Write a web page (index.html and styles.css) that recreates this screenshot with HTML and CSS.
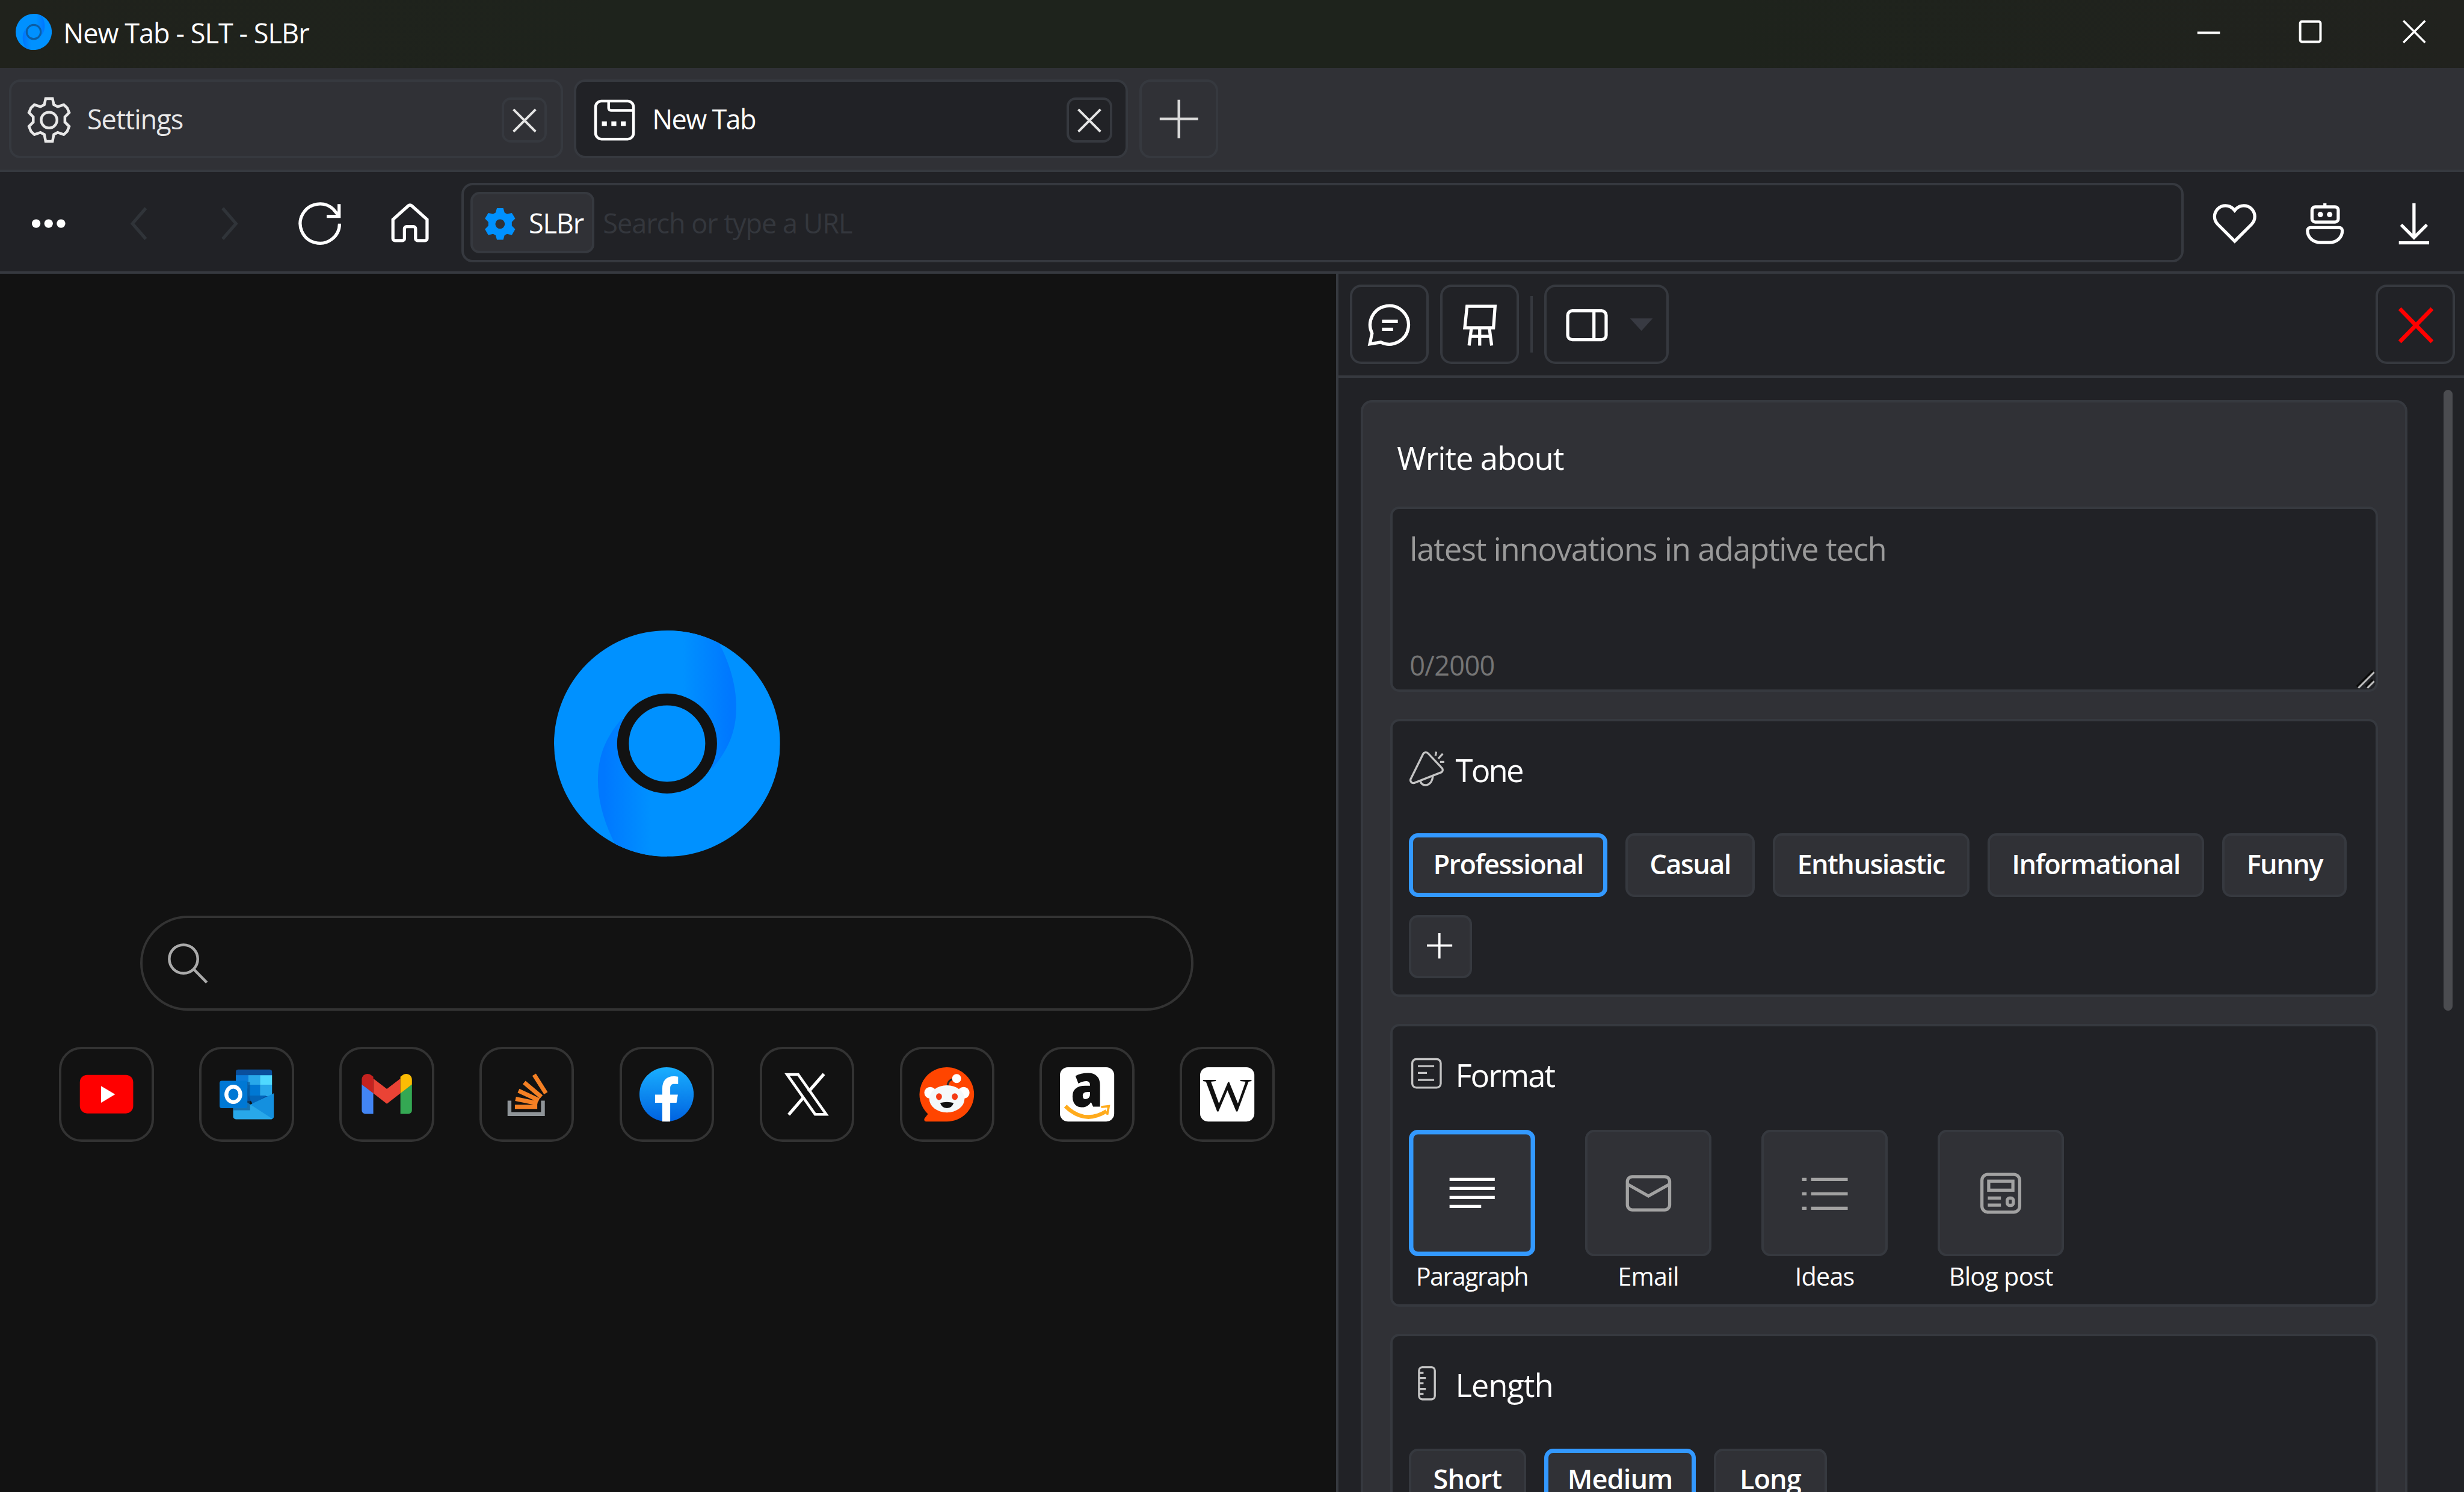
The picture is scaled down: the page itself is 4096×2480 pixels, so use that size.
FILE: index.html
```html
<!DOCTYPE html>
<html lang="en">
<head>
<meta charset="utf-8">
<title>New Tab - SLT - SLBr</title>
<link rel="stylesheet" href="styles.css">
</head>
<body>
<svg class="defs" width="0" height="0">
  <defs>
    <linearGradient id="blade" gradientUnits="userSpaceOnUse" x1="57" y1="0" x2="78" y2="0">
      <stop offset="0" stop-color="#0091ff"/><stop offset="1" stop-color="#0078ff"/>
    </linearGradient>
    <clipPath id="disc"><circle cx="50" cy="50" r="50"/></clipPath>
    <symbol id="logo" viewBox="0 0 100 100">
      <circle cx="50" cy="50" r="50" fill="#0091ff"/>
      <g clip-path="url(#disc)">
        <path id="swoosh" d="M50 0H70C77 12 80.6 23 80.6 34C80.6 46 76 54 70 61L50 50z" fill="url(#blade)"/>
        <use href="#swoosh" transform="rotate(180 50 50)"/>
      </g>
      <circle cx="50" cy="50" r="19.5" fill="#0091ff" stroke="currentColor" stroke-width="5.2"/>
    </symbol>
    <symbol id="cross" viewBox="0 0 20 20"><path d="M5.2 5.3l9.8 9.8M15 5.3l-9.8 9.8"/></symbol>
  </defs>
</svg>
<div class="window">
  <header class="titlebar">
    <svg class="app-icon"><use href="#logo"/></svg>
    <span class="t title">New Tab - SLT - SLBr</span>
    <div class="controls">
      <svg viewBox="0 0 45 30"><path d="M17.5 14.5h10"/></svg>
      <svg viewBox="0 0 45 30"><rect x="18" y="9.5" width="9" height="9" rx=".8"/></svg>
      <svg class="thin" viewBox="0 0 45 30"><path d="M18.7 9.2l9.6 9.6M28.3 9.2l-9.6 9.6"/></svg>
    </div>
  </header>

  <nav class="tabs">
    <div class="tab">
      <svg class="tab-icon" viewBox="0 0 20 20"><path d="M8.500.500h3l.6 2.700 1.700.9 2.700-.9 1.500 1.400.9 2.100-1.900 1.900v2.300l1.900 1.900-.9 2.200-1.500 1.400-2.700-.9-1.700.9-.6 3h-3l-.6-3-1.700-.9-2.700.9L2 15l-.9-2.200L3 10.900V8.600L1.100 6.700 2 4.600l1.500-1.400 2.700.9 1.700-.9z"/><circle cx="10" cy="10" r="3.500"/></svg>
      <span class="t tab-label">Settings</span>
      <span class="tab-close"><svg><use href="#cross"/></svg></span>
    </div>
    <div class="tab active">
      <svg class="tab-icon" viewBox="0 0 20 20"><rect x="1.600" y="1.600" width="16.800" height="16.800" rx="2.600"/><path d="M7.400 1.600v3.100a1 1 0 0 0 1 1h10"/><path class="fill" d="M4.400 10.600h2.200v2H4.400zM8.600 10.600h2.200v2H8.600zM12.800 10.600H15v2h-2.200z"/></svg>
      <span class="t tab-label">New Tab</span>
      <span class="tab-close"><svg><use href="#cross"/></svg></span>
    </div>
    <div class="tab-new"><svg viewBox="0 0 35 35"><path d="M17.500 9v17M9 17.500h17"/></svg></div>
  </nav>

  <div class="toolbar">
    <svg class="tool" viewBox="0 0 35 35"><g class="fill"><circle cx="12" cy="18" r="1.900"/><circle cx="17.500" cy="18" r="1.900"/><circle cx="23" cy="18" r="1.900"/></g></svg>
    <svg class="tool off" viewBox="0 0 35 35"><path d="M20.600 11.200L14.700 18l5.900 6.800"/></svg>
    <svg class="tool off" viewBox="0 0 35 35"><path d="M14.400 11.200l5.900 6.800-5.900 6.800"/></svg>
    <svg class="tool" viewBox="0 0 35 35"><path d="M26.200 18a8.700 8.700 0 1 1-2.700-6.300l2.400 2.900M26 9.400v5.400h-5.500"/></svg>
    <svg class="tool" viewBox="0 0 35 35"><path d="M9.900 16.200l6.800-6.100a1.100 1.100 0 0 1 1.500 0l6.800 6.100v8.400a.9.900 0 0 1-.9.900h-3.300a.9.900 0 0 1-.9-.9v-4.300a1 1 0 0 0-1-1h-2.900a1 1 0 0 0-1 1v4.300a.9.900 0 0 1-.9.900h-3.300a.9.900 0 0 1-.9-.9z"/></svg>
    <div class="address">
      <div class="site">
        <svg viewBox="0 0 14 14"><path fill="#0091ff" fill-rule="evenodd" d="M5.600 0h2.800l.6 2 1.100.6 2.100-.5L13.700 4.600l-1.500 1.500v1.700l1.500 1.500-1.500 2.600-2.100-.5-1.100.6-.6 2H5.600l-.6-2-1.100-.6-2.100.5L.3 9.300l1.500-1.500V6.100L.3 4.600 1.800 2.100l2.100.5L5 2zM7 4.900a2.100 2.100 0 1 0 0 4.200 2.100 2.100 0 0 0 0-4.200z"/></svg>
        <span class="t">SLBr</span>
      </div>
      <span class="t hint">Search or type a URL</span>
    </div>
    <svg class="tool" viewBox="0 0 35 35"><path d="M17.500 25.800L10 18.300a4.800 4.800 0 0 1 6.900-6.800l.6.700.6-.7a4.800 4.800 0 0 1 6.900 6.800z"/></svg>
    <svg class="tool" viewBox="0 0 35 35"><path d="M17.500 9v1.500"/><rect x="11.800" y="10.600" width="11.600" height="6.700" rx="1.400"/><path d="M11.200 19.800h12.700a1.300 1.300 0 0 1 1.300 1.300c0 3.200-2.600 5.300-5.700 5.300h-3.800c-3.300 0-5.900-2.100-5.900-5.300a1.300 1.300 0 0 1 1.400-1.300z"/><g class="fill"><circle cx="15.500" cy="14" r="1.200"/><circle cx="19.600" cy="14" r="1.200"/></g></svg>
    <svg class="tool" viewBox="0 0 35 35"><path d="M17 9v15M11.300 18.500l5.700 5.700 5.700-5.700M10.300 26.500h13.400"/></svg>
  </div>

  <div class="content">
    <main class="start">
      <svg class="logo"><use href="#logo"/></svg>
      <div class="search"><svg viewBox="0 0 18 18"><circle cx="7.200" cy="7.200" r="6.300"/><path d="M11.800 11.800l5.700 5.800"/></svg></div>
      <div class="links">
        <div class="link"><svg viewBox="0 0 24 24"><rect y="3.400" x=".2" width="23.600" height="17" rx="3.200" fill="#f00"/><path d="M9.600 8.300v7.400l6.200-3.700z" fill="#fff"/></svg></div>
        <div class="link"><svg viewBox="0 0 24 24"><path d="M7.200 2a1 1 0 0 1 1-1h14a1 1 0 0 1 1 1v13h-16z" fill="#0a4f9c"/><path d="M7.200 3.500h5.500v6H7.200z" fill="#0a7bd8"/><path d="M12.700 3.500h5.200v4.300h-5.200z" fill="#28a8ea"/><path d="M17.900 3.500h5.300v4.300h-5.300z" fill="#50d9ff"/><path d="M12.700 7.800h5.200v5h-5.200z" fill="#0078d4"/><path d="M17.900 7.800h5.300v5h-5.300z" fill="#28a8ea"/><path d="M7.200 9.500h5.500v5H7.200zM12.700 12.500h8l-6 4z" fill="#0364b8"/><path d="M24 11.500v10.300a1.200 1.200 0 0 1-1.200 1.200L13 16.800z" fill="#1490df"/><path d="M6 11.500l17.400 11.300-.6.200H7.200A1.200 1.200 0 0 1 6 21.800z" fill="#28a8ea"/><path d="M6 6.500h7.500V19H6z" fill="#0a4f8c" opacity=".6"/><rect y="6" width="12.300" height="12.100" rx="1" fill="#0078d4"/><ellipse cx="6.100" cy="12" rx="3.100" ry="3.400" fill="none" stroke="#fff" stroke-width="1.700"/></svg></div>
        <div class="link"><svg viewBox="0 0 24 24"><path d="M.9 7.500L6 11.300v9.300H2.500A1.600 1.600 0 0 1 .9 19z" fill="#4285f4"/><path d="M23.100 7.500L18 11.300v9.300h3.500a1.600 1.600 0 0 0 1.600-1.600z" fill="#34a853"/><path d="M6 5l6 4.600L18 5v6.500l-6 4.700-6-4.700z" fill="#ea4335"/><path d="M.9 5.500c0-2.300 2.500-3.300 4.200-2L6 4.200v7.300L.9 7.600z" fill="#c5221f"/><path d="M23.100 5.500c0-2.300-2.500-3.300-4.200-2l-.9.700v7.300l5.100-3.900z" fill="#fbbc04"/></svg></div>
        <div class="link"><svg viewBox="0 0 24 24"><path d="M4.500 14.800v5.900h14.800v-5.900" fill="none" stroke="#8f9498" stroke-width="1.700"/><path d="M6.900 17.500h9.900M7.200 14l9.700 2M8.500 10.400l9 4.200M11 6.700l7.600 6.400M15.400 3.300l5.200 8.200" stroke="#f48024" stroke-width="1.900"/></svg></div>
        <div class="link"><svg viewBox="0 0 24 24"><defs><linearGradient id="fb" x2="0" y2="1"><stop stop-color="#19afff"/><stop offset="1" stop-color="#0062e0"/></linearGradient></defs><circle cx="12" cy="12" r="12" fill="url(#fb)"/><path d="M10.100 24v-8.300H6.900v-3.600h3.200V9.500c0-3.500 1.800-5.500 5-5.500.8 0 1.500.1 2 .2v3.200h-1.700c-1.300 0-1.800.7-1.800 1.900v2.800h3.400l-.6 3.600h-2.800V24z" fill="#fff"/></svg></div>
        <div class="link"><svg viewBox="0 0 24 24"><rect width="24" height="24" rx="3.500"/><path d="M3.300 3.200h4.900l12.400 17.600h-4.900z" fill="none" stroke="#fff" stroke-width="1.200"/><path d="M19.600 3l-6.800 7.800M10.700 13.200L4 21" stroke="#fff" stroke-width="1.400"/></svg></div>
        <div class="link"><svg viewBox="0 0 24 24"><path d="M12 0a12 12 0 1 1 0 24H2.800c-.8 0-1.100-.9-.6-1.500l1.400-1.800A12 12 0 0 1 12 0z" fill="#ff4500"/><path d="M12.200 8.500c.2-2 1.200-3.300 3.200-3.300" stroke="#2a2a2a" stroke-width=".8" fill="none"/><circle cx="16.300" cy="5" r="2" fill="#fff"/><circle cx="4.600" cy="11.300" r="2.600" fill="#fff"/><circle cx="19.400" cy="11.300" r="2.600" fill="#fff"/><ellipse cx="12" cy="14" rx="7.800" ry="6" fill="#f4f8fa"/><ellipse cx="8.500" cy="13" rx="1.300" ry="1.500" fill="#f43a14"/><ellipse cx="15.500" cy="13" rx="1.300" ry="1.500" fill="#f43a14"/><path d="M9 15.800q3-.8 6 0-.8 2.300-3 2.300t-3-2.300z" fill="#111"/></svg></div>
        <div class="link"><svg viewBox="0 0 24 24"><rect width="24" height="24" rx="3.500" fill="#fff"/><text x="12" y="17.400" text-anchor="middle" font-family="Open Sans, sans-serif" font-weight="800" font-size="26.500" textLength="14.500" lengthAdjust="spacingAndGlyphs">a</text><path d="M2.400 17.200q8.500 8.300 18.200 2.200" fill="none" stroke="#ffab1c" stroke-width="1.700"/><path d="M18.200 17.600l3.400-.4-.7 3.800" fill="none" stroke="#ffab1c" stroke-width="1"/></svg></div>
        <div class="link"><svg viewBox="0 0 24 24"><rect width="24" height="24" rx="3.500" fill="#fff"/><text x="12" y="19.300" text-anchor="middle" font-family="Liberation Serif, serif" font-size="21" textLength="21.500" lengthAdjust="spacingAndGlyphs">W</text></svg></div>
      </div>
    </main>

    <aside class="side">
      <div class="side-bar">
        <svg class="btn" viewBox="0 0 35 35"><path d="M9.800 21.600A8.500 8.500 0 1 1 13.700 25.500L8.800 26.300zM14.200 16.300h7M14.200 19.800h4.900"/></svg>
        <svg class="btn" viewBox="0 0 35 35"><path d="M11.900 9.600h12.400l-.7 9.500H10.900zM13.800 19.500l-1 7.500M21.800 19.500l1 7.500M17.500 19.500V27M13.300 22.900h9"/></svg>
        <span class="rule"></span>
        <svg class="btn wide" viewBox="0 0 55 35"><rect x="10.400" y="11.600" width="17" height="12.800" rx="2"/><path d="M22 11.600v12.800"/><path class="caret" d="M38 15h10l-5 5.500z"/></svg>
        <svg class="btn close" viewBox="0 0 35 35"><path d="M10.700 10.700l14.300 14.600M25 10.700L10.700 25.300"/></svg>
      </div>
      <div class="side-body">
        <div class="card">
          <h2 class="card-title"><span class="t">Write about</span></h2>
          <div class="prompt">
            <span class="t prompt-hint">latest innovations in adaptive tech</span>
            <span class="t count">0/2000</span>
            <svg class="grip" viewBox="0 0 8 8"><path d="M.5 7.500l7-7M4.500 7.500l3-3" stroke="#0b0b0b" stroke-width="1.600"/><path d="M.9 7.900l7-7M4.900 7.900l3-3" stroke="#bbb" stroke-width=".8"/></svg>
          </div>
          <section class="group">
            <h3><svg viewBox="0 0 16 16"><path d="M6.300 1.400L.9 12.300a1.300 1.300 0 0 0 1.500 1.900l12-4.700a1.200 1.200 0 0 0 .2-1.900L8.500 1.100a1.400 1.400 0 0 0-2.200.3zM5 13.200c.6 3 5.200 2.800 5.600-2M11.800 2.200L12.100.4M13 3.500L15 1.300M13.800 4.900h1.900"/></svg><span class="t tone">Tone</span></h3>
            <div class="chips">
              <span class="chip on c1"><b class="t">Professional</b></span>
              <span class="chip c2"><b class="t">Casual</b></span>
              <span class="chip c3"><b class="t">Enthusiastic</b></span>
              <span class="chip c4"><b class="t">Informational</b></span>
              <span class="chip c5"><b class="t">Funny</b></span>
              <span class="chip add"><svg viewBox="0 0 28 28"><path d="M13.500 8v11.200M8 13.500h11.200"/></svg></span>
            </div>
          </section>
          <section class="group tight">
            <h3><svg viewBox="0 0 16 16"><rect x="1.500" y="1.200" width="12.600" height="12.600" rx="1.800"/><path d="M4 4.300h7.200M4 7.300h4M4 10.400h7.200"/></svg><span class="t format">Format</span></h3>
            <div class="tiles">
              <div class="tile on"><svg viewBox="0 0 56 56"><path d="M18 21.900h20M18 25.900h20M18 29.900h20M18 33.900h14"/></svg><span class="t para">Paragraph</span></div>
              <div class="tile"><svg viewBox="0 0 56 56"><rect x="18.700" y="20.700" width="18.700" height="14.700" rx="2.200"/><path d="M18.700 24l9.300 5.300 9.400-5.300"/></svg><span class="t">Email</span></div>
              <div class="tile"><svg viewBox="0 0 56 56"><path d="M22 21.900h16.200M22 28.300h16.200M22 34.700h16.200M18 21.900h2M18 28.300h2M18 34.700h2"/></svg><span class="t">Ideas</span></div>
              <div class="tile"><svg viewBox="0 0 56 56"><rect x="19.600" y="19.700" width="16.700" height="16.700" rx="2.600"/><rect x="22.600" y="22.700" width="10.700" height="4"/><path d="M22.200 30.200h5.800M22.200 33.300h5.800"/><rect x="30.800" y="30.200" width="2.700" height="3.200" rx="1"/></svg><span class="t">Blog post</span></div>
            </div>
          </section>
          <section class="group last">
            <h3><svg viewBox="0 0 16 16"><rect x="4.500" y=".7" width="7" height="14.200" rx="1.500"/><path d="M4.500 3.200h2M4.500 5.500h3M4.500 7.800h2M4.500 10.300h3M4.500 12.500h2"/></svg><span class="t length">Length</span></h3>
            <div class="chips loose">
              <span class="chip c6"><b class="t">Short</b></span>
              <span class="chip on c7"><b class="t">Medium</b></span>
              <span class="chip c8"><b class="t">Long</b></span>
            </div>
          </section>
        </div>
        <div class="scroll"></div>
      </div>
    </aside>
  </div>
</div>
</body>
</html>
```
FILE: styles.css
```css
:root {
  font-size: 37.577px;
  --line: 4px;
  --edge: #36393f;
  --panel: #212226;
  --raised: #303136;
  --accent: #3399ff;
}
* { box-sizing: border-box; }
body {
  margin: 0;
  overflow: hidden;
  background: #121212;
  color: #fff;
  font-family: "Open Sans", "Noto Sans", sans-serif;
}
svg { display: block; flex: none; overflow: visible; fill: none; stroke: currentColor; stroke-width: 1.2; }
svg .fill { fill: currentColor; stroke: none; }
.defs { position: absolute; }
.t { white-space: nowrap; }
.window { display: flex; flex-direction: column; width: 4096px; height: 2480px; overflow: hidden; font-size: 1.2rem; }

.titlebar {
  display: flex; align-items: center; flex: none; height: 3rem; padding-left: .7rem;
  background: linear-gradient(90deg, #20221c, #1e231c 25%, #1e231c 70%, #21221e);
}
.app-icon { width: 1.6rem; height: 1.6rem; margin-top: -.2rem; stroke: none; color: #0b5ea6; }
.title { margin: -.12rem 0 0 .5rem; letter-spacing: -.026rem; }
.controls { display: flex; margin-left: auto; }
.controls svg { width: 4.5rem; height: 3rem; stroke-width: 1.05; }
.controls .thin { margin-right: .05rem; stroke-width: .95; }

.tabs { display: flex; flex: none; gap: .5rem; height: 4.6rem; padding: .5rem .4rem 0; background: var(--raised); border-bottom: var(--line) solid var(--edge); }
.tab { display: flex; align-items: center; width: 24.5rem; height: 3.5rem; padding: 0 .6rem 0 .7rem; border: var(--line) solid var(--edge); border-radius: .5rem; color: #e8e8e8; }
.tab.active { background: var(--panel); color: #fff; }
.tab-icon { width: 2rem; height: 2rem; margin: .1rem 0 0 -.03rem; }
.tab-label { margin-left: .68rem; letter-spacing: -.026rem; }
.active .tab-label { letter-spacing: -.045rem; }
.tab-close { width: 2rem; height: 2rem; margin: .1rem 0 0 auto; border: var(--line) solid var(--edge); border-radius: .4rem; }
.tab-close svg { width: 2rem; height: 2rem; margin: calc(var(--line) * -1); stroke-width: 1.05; color: #e4e4e4; }
.tab-new { width: 3.5rem; height: 3.5rem; border: var(--line) solid var(--edge); border-radius: .5rem; color: #d8d8d8; }
.tab-new svg { width: 3.5rem; height: 3.5rem; margin: calc(var(--line) * -1); }

.toolbar { display: flex; flex: none; gap: .5rem; height: 4.5rem; padding: .5rem .4rem 0; background: var(--panel); border-bottom: var(--line) solid var(--edge); }
.tool { width: 3.5rem; height: 3.5rem; stroke-width: 1.4; }
.tool.off { color: #303439; }
.address { display: flex; align-items: center; width: 76.2rem; height: 3.5rem; padding-left: .3rem; border: var(--line) solid var(--edge); border-radius: .5rem; }
.site { display: flex; align-items: center; width: 5.5rem; height: 2.7rem; padding-left: .5rem; background: var(--raised); border: var(--line) solid var(--edge); border-radius: .4rem; }
.site svg { width: 1.4rem; height: 1.4rem; margin-top: .1rem; stroke: none; }
.site .t { margin-left: .58rem; letter-spacing: -.032rem; }
.hint { margin-left: .37rem; color: #34373d; letter-spacing: -.029rem; }

.content { display: flex; flex: 1; min-height: 0; }
.start { display: flex; flex-direction: column; align-items: center; width: 59.1rem; padding: 15.8rem .1rem 0 0; }
.logo { width: 10rem; height: 10rem; color: #121212; stroke: none; }
.search { display: flex; align-items: center; width: 46.6rem; height: 4.2rem; margin-top: 2.6rem; padding-left: 1.1rem; border: var(--line) solid #333; border-radius: 2.1rem; color: #aaa; }
.search svg { width: 1.8rem; height: 1.8rem; }
.links { display: flex; gap: 2rem; margin-top: 1.6rem; }
.link { display: flex; align-items: center; justify-content: center; width: 4.2rem; height: 4.2rem; border: var(--line) solid #333; border-radius: 1rem; }
.link svg { width: 2.4rem; height: 2.4rem; stroke: none; }
.link text { fill: #111; }

.side { display: flex; flex-direction: column; flex: 1; background: var(--panel); border-left: var(--line) solid var(--edge); }
.side-bar { display: flex; flex: none; gap: .5rem; height: 4.6rem; padding: .5rem .4rem 0 .5rem; border-bottom: var(--line) solid var(--edge); }
.btn { width: 3.5rem; height: 3.5rem; border-radius: .5rem; box-shadow: inset 0 0 0 var(--line) var(--edge); stroke-width: 1.4; }
.btn.wide { width: 5.5rem; }
.btn .caret { fill: #383a42; stroke: none; }
.btn.close { margin-left: auto; color: #f00; stroke-width: 1.8; }
.rule { width: var(--line); height: 2.5rem; margin-top: .5rem; background: var(--edge); }
.side-body { position: relative; flex: 1; min-height: 0; padding: 1rem 0 0 1rem; overflow: hidden; }
.scroll { position: absolute; top: .55rem; right: .5rem; width: .4rem; height: 27.45rem; border-radius: .2rem; background: #4b4c50; }
.card { width: 46.3rem; height: 60rem; padding: 1.3rem 1.2rem 0; background: var(--raised); border: var(--line) solid var(--edge); border-radius: .5rem; }
.card-title { margin: 0 0 1rem .29rem; font-size: 1.4rem; font-weight: 400; line-height: 2.3rem; letter-spacing: -.03rem; }
.prompt { position: relative; display: flex; flex-direction: column; justify-content: space-between; height: 8.2rem; padding: .81rem .74rem .27rem; background: var(--panel); border: var(--line) solid var(--edge); border-radius: .4rem; }
.prompt-hint { font-size: 1.4rem; line-height: 1.9rem; color: #9a9a9a; letter-spacing: -.034rem; }
.count { font-size: 1.2rem; line-height: 1.6rem; color: #757575; letter-spacing: -.018rem; }
.grip { position: absolute; right: .05rem; bottom: .05rem; width: .8rem; height: .8rem; }
.group { height: 12.3rem; margin-top: 1.2rem; padding: 1.06rem .7rem 0; background: var(--panel); border: var(--line) solid var(--edge); border-radius: .4rem; }
.group.tight { height: 12.5rem; }
.group h3 { display: flex; align-items: center; gap: .47rem; margin: 0 0 1.7rem; font-size: 1.4rem; font-weight: 400; line-height: 2.2rem; }
.group.tight h3 { margin-bottom: 1.3rem; }
.group h3 svg { width: 1.6rem; height: 1.6rem; margin-top: -.1rem; stroke-width: .9; color: #c4c4c4; }
.tone { letter-spacing: -.075rem; }
.format { letter-spacing: -.055rem; }
.length { letter-spacing: -.03rem; }
.chips { display: flex; flex-wrap: wrap; gap: .8rem; letter-spacing: -.042rem; }
.chips.loose { letter-spacing: -.024rem; }
.chip { display: flex; align-items: center; justify-content: center; height: 2.8rem; padding-bottom: .12rem; background: var(--raised); border: var(--line) solid var(--edge); border-radius: .4rem; }
.chip b { font-weight: 600; }
.chip.on { border: .2rem solid var(--accent); }
.c1 { width: 8.8rem; }
.c2 { width: 5.7rem; }
.c3 { width: 8.7rem; }
.c4 { width: 9.6rem; }
.c5 { width: 5.5rem; }
.c6 { width: 5.2rem; }
.c7 { width: 6.7rem; }
.c8 { width: 5rem; }
.chip.add { width: 2.8rem; padding: 0; }
.add svg { width: 2.8rem; height: 2.8rem; stroke-width: 1; }
.tiles { display: flex; gap: 2.2rem; }
.tile { display: flex; flex-direction: column; align-items: center; width: 5.6rem; font-size: 1.1rem; line-height: 1.6rem; letter-spacing: -.02rem; }
.tile svg { width: 5.6rem; height: 5.6rem; margin-bottom: .07rem; border-radius: .4rem; background: var(--raised); box-shadow: inset 0 0 0 var(--line) var(--edge); color: #a2a2a2; stroke-width: 1.4; }
.tile.on svg { box-shadow: inset 0 0 0 .2rem var(--accent); color: #fff; }
.para { letter-spacing: -.042rem; }
```
